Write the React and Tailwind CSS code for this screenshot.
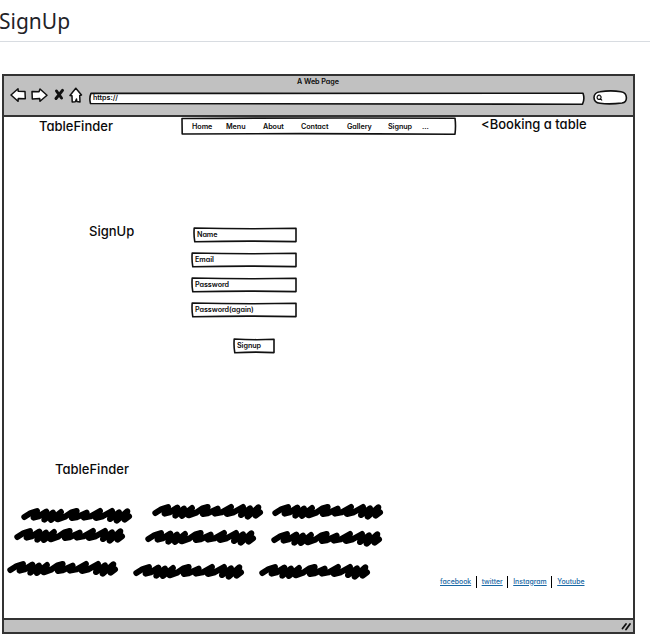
const sketchFont = "font-['Inter','Open_Sans',sans-serif] [font-feature-settings:'cv11'] text-[#0a0a0a] whitespace-nowrap";
const small = `${sketchFont} text-[7.2px] leading-none font-semibold tracking-[-0.05px]`;
const large = `${sketchFont} text-[13px] leading-[15px] font-medium`;

function Outline({ w, h, d, fill = "white", stroke = 1.6 }) {
  return (
    <svg className="absolute inset-0 overflow-visible" width={w} height={h} viewBox={`0 0 ${w} ${h}`} aria-hidden="true">
      <path d={d} fill={fill} stroke="#111" strokeWidth={stroke} strokeLinejoin="round" />
    </svg>
  );
}

function Field({ label, w = 104, className = "" }) {
  const left = 1.2;
  const d = `M${left} 1 Q${w / 2} 2.2 ${w - 1} 1.3 L${w - 1} 14.6 Q${w / 2} 13.5 ${left + 0.6} 14.8 Q0.6 8 ${left} 1Z`;
  return (
    <div className={`relative flex h-[16px] items-center pl-[4px] ${className}`}>
      <Outline w={w} h={16} d={d} />
      <span className={`relative ${small}`}>{label}</span>
    </div>
  );
}

function Scribble({ className = "" }) {
  return (
    <svg className={`block h-[15px] w-[111px] shrink-0 overflow-visible ${className}`} viewBox="0 0 333 45" aria-hidden="true">
      <path
        d="M7 27 L26 15 L45 9 L35 29 L50 25 L73 11 L67 35 L93 14 L87 36 L117 12 L107 34 L128 27 L148 13 L164 9 L150 30 L164 28 L194 14 L186 29 L206 25 L234 9 L222 30 L240 26 L270 9 L264 33 L291 13 L284 38 L316 10 L308 35 L321 25"
        fill="none"
        stroke="#000"
        strokeWidth="18"
        strokeLinecap="round"
        strokeLinejoin="round"
      />
    </svg>
  );
}

function BrowserIcons() {
  return (
    <svg className="block h-[18px] w-[74px] shrink-0" viewBox="0 0 74 18" stroke="#111" strokeWidth="1.5" strokeLinejoin="round" strokeLinecap="round" aria-hidden="true">
      <path d="M1 8 L8 1.8 L8.3 4.3 L15 4.6 L15.3 11.8 L8.3 11.4 L8 14.3Z" fill="white" />
      <path d="M22 4.6 L29 4.7 L30 2 L37 8.2 L30 14.3 L29.7 11.5 L22.3 12Z" fill="white" />
      <path d="M46.5 4 L51.5 11 M52.5 3.4 L46 11.5" fill="none" strokeWidth="3" />
      <path d="M65.8 1.2 L71.5 8 L69.7 8.5 L70 15 L66.8 14.5 L66.5 12 L65.3 14.7 L62.2 15 L62 8.8 L60 8.5Z" fill="white" />
    </svg>
  );
}

function Toolbar() {
  return (
    <div className="h-[41px] border-b-2 border-[#333] bg-[#c1c1c1]">
      <div className={`flex h-[12px] items-center justify-center pr-px ${small}`}>A Web Page</div>
      <div className="flex h-[15px] items-center pl-[6px]">
        <BrowserIcons />
        <div className="relative ml-[5px] mt-[5px] flex h-[13px] w-[496px] items-center pl-[4px]">
          <Outline w={496} h={13} d="M2 1.4 Q160 0.4 494 1.3 Q496 7 493.5 12.2 Q250 12 1.5 11.5 Q0 6 2 1.4Z" />
          <span className={`relative ${small}`}>https://</span>
        </div>
        <svg className="ml-[7px] mt-[4px] block h-[15px] w-[36px]" viewBox="0 0 36 15" fill="white" stroke="#111" strokeWidth="1.6" aria-hidden="true">
          <path d="M8 1.8 Q19 0 29 1.8 C36 3 36 12 30 13 Q18 14.5 8 13.3 C0 12.5 0 2.5 8 1.8Z" />
          <path d="M8.5 5.5 C5 4 4 8.8 6.5 9.3 C9.5 9.7 10 5.7 7.4 5.5 M8.4 8.3 L10 10.5" strokeWidth="1.2" />
        </svg>
      </div>
    </div>
  );
}

const nav = [
  ["Home", "w-[34px]"],
  ["Menu", "w-[37px]"],
  ["About", "w-[38px]"],
  ["Contact", "w-[46px]"],
  ["Gallery", "w-[41px]"],
  ["Signup", "w-[34px]"],
  ["...", "w-[10px]"],
];

const links = ["facebook", "twitter", "Instagram", "Youtube"];

export default function App() {
  return (
    <div className="h-[637px] w-[650px] overflow-hidden bg-white">
      <header className="h-[42px] border-b border-[#d8dce1] pt-[6px]">
        <h1 className="-ml-[1px] font-['Noto_Sans',sans-serif] text-[21px] leading-[30px] text-[#1f2328]">SignUp</h1>
      </header>

      <main className="mt-[32px] ml-[2px] flex h-[560px] w-[633px] flex-col border-2 border-[#333] bg-white">
        <Toolbar />

        <div className="flex h-[20px] items-start pl-[35px]">
          <span className={`w-[142px] pt-[2px] ${large}`}>TableFinder</span>
          <nav className={`relative flex h-[18px] w-[275px] items-center pt-[2px] pl-[11px] ${small}`}>
            <Outline w={275} h={18} d="M1 1.5 Q120 0.7 274 1.2 Q275 9 274 17.2 Q130 16.2 1.2 17Z" />
            {nav.map(([label, width]) => (
              <span key={label} className={`relative ${width}`}>{label}</span>
            ))}
          </nav>
          <span className={`ml-[25px] ${large}`}>&lt;Booking a table</span>
        </div>

        <section className="mt-[90px] flex h-[235px] pl-[85px]">
          <h2 className={`-mt-[3px] w-[102px] ${large}`}>SignUp</h2>
          <form className="flex w-[106px] flex-col">
            <Field label="Name" w={104} className="ml-[2px] w-[104px]" />
            <Field label="Email" w={106} className="mt-[9px] w-[106px]" />
            <Field label="Password" w={106} className="mt-[9px] w-[106px]" />
            <Field label="Password(again)" w={106} className="mt-[9px] w-[106px]" />
            <Field label="Signup" w={42} className="mt-[20px] ml-[42px] w-[42px]" />
          </form>
        </section>

        <footer className="flex grow">
          <div className="w-[436px] shrink-0">
            <h2 className={`pl-[51px] ${large}`}>TableFinder</h2>
            <div className="flex items-start pt-[27px] pl-[18px]">
              <Scribble className="mt-[4px]" />
              <Scribble className="ml-[20px]" />
              <Scribble className="ml-[9px]" />
            </div>
            <div className="flex items-start pt-[5px] pl-[11px]">
              <Scribble />
              <Scribble className="mt-[2px] ml-[20px]" />
              <Scribble className="mt-[3px] ml-[15px]" />
            </div>
            <div className="flex items-start pt-[15px] pl-[4px]">
              <Scribble />
              <Scribble className="mt-[3px] ml-[15px]" />
              <Scribble className="mt-[3px] ml-[15px]" />
            </div>
          </div>
          <div className={`mt-[114px] flex h-[12px] items-center ${sketchFont} text-[6.9px] leading-none font-medium`}>
            {links.map((link, i) => (
              <span key={link} className="flex h-[12px] items-center">
                {i > 0 && <span className="mr-[5px] ml-[4.5px] h-[12px] w-px bg-black" />}
                <a className="text-[#1767a4] underline">{link}</a>
              </span>
            ))}
          </div>
        </footer>

        <div className="flex h-[14px] shrink-0 items-center justify-end border-t-2 border-[#333] bg-[#c1c1c1] pr-[2px]">
          <svg className="h-[9px] w-[10px]" viewBox="0 0 10 9" stroke="#111" strokeWidth="1.8" strokeLinecap="round" aria-hidden="true">
            <path d="M1.5 6.5 L5 2 M5 7.5 L9 2" />
          </svg>
        </div>
      </main>
    </div>
  );
}
